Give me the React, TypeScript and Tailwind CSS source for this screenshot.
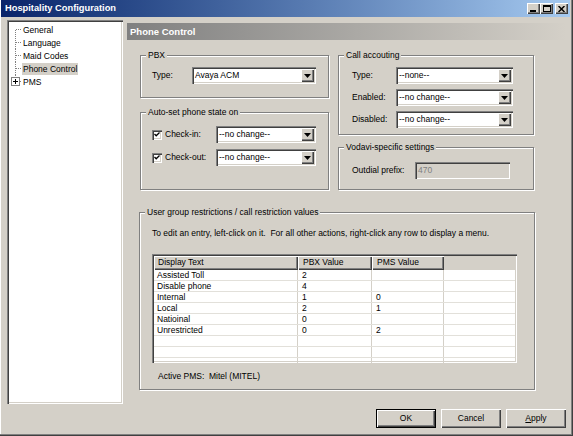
import React from 'react';

const rows: [string, string, string][] = [
  ['Assisted Toll', '2', ''],
  ['Disable phone', '4', ''],
  ['Internal', '1', '0'],
  ['Local', '2', '1'],
  ['Natioinal', '0', ''],
  ['Unrestricted', '0', '2'],
  ['', '', ''],
  ['', '', ''],
  ['', '', ''],
];

const treeItems = ['General', 'Language', 'Maid Codes', 'Phone Control', 'PMS'];

// Classic 3D edges
const sunken =
  'shadow-[inset_1px_1px_0_#808080,inset_2px_2px_0_#404040,inset_-1px_-1px_0_#ffffff,inset_-2px_-2px_0_#d4d0c8]';
const raised = 'shadow-[inset_1px_1px_0_#ffffff,inset_-1px_-1px_0_#404040,inset_-2px_-2px_0_#808080]';

function Combo({ value, w }: { value: string; w: string }) {
  return (
    <div className={`flex h-[17px] ${w} bg-white p-[2px] ${sunken}`}>
      <span className="flex-1 truncate pl-[1px] leading-[13px]">{value}</span>
      <span className={`flex w-[13px] items-center justify-center bg-[#d4d0c8] ${raised}`}>
        <svg width="7" height="4" viewBox="0 0 7 4">
          <path d="M0 0h7L3.5 4z" fill="#000" />
        </svg>
      </span>
    </div>
  );
}

function Check() {
  return (
    <span className={`flex h-[10px] w-[10px] items-center justify-center bg-white ${sunken}`}>
      <svg width="6" height="5" viewBox="0 0 6 5">
        <path d="M0.5 2L2.2 3.8L5.5 0.5" stroke="#000" strokeWidth="1.3" fill="none" />
      </svg>
    </span>
  );
}

function Group({ label, className, children }: { label: string; className: string; children?: React.ReactNode }) {
  return (
    <div className={`relative border border-[#808080] shadow-[inset_1px_1px_0_#ffffff,1px_1px_0_#ffffff] ${className}`}>
      <span className="absolute -top-[7px] left-[5px] bg-[#d4d0c8] px-[2px] leading-[12px]">{label}</span>
      {children}
    </div>
  );
}

function TreeLine({ idx, last }: { idx: number; last: boolean }) {
  const top = idx === 0 ? 6.5 : 0;
  return (
    <svg width="13" height="13" viewBox="0 0 13 13" shapeRendering="crispEdges">
      {last ? (
        <>
          <line x1="6.5" y1="0" x2="6.5" y2="2" stroke="#808080" strokeDasharray="1 1" />
          <rect x="2.5" y="2.5" width="8" height="8" fill="#fff" stroke="#808080" />
          <line x1="4" y1="6.5" x2="9" y2="6.5" stroke="#000" />
          <line x1="6.5" y1="4" x2="6.5" y2="9" stroke="#000" />
          <line x1="11" y1="6.5" x2="13" y2="6.5" stroke="#808080" strokeDasharray="1 1" />
        </>
      ) : (
        <>
          <line x1="6.5" y1={top} x2="6.5" y2="13" stroke="#808080" strokeDasharray="1 1" />
          <line x1="7" y1="6.5" x2="13" y2="6.5" stroke="#808080" strokeDasharray="1 1" />
        </>
      )}
    </svg>
  );
}

export default function App() {
  return (
    <div
      className={`flex h-[436px] w-[573px] flex-col overflow-hidden bg-[#d4d0c8] font-['Liberation_Sans',Arial,sans-serif] text-[8.5px] text-black shadow-[inset_-1px_-1px_0_#404040,inset_-2px_-2px_0_#808080,inset_1px_0_0_#ffffff]`}
    >
      {/* Title bar */}
      <div className="ml-[1px] mr-[3px] flex h-[17px] items-center bg-linear-to-r from-[#0a246a] to-[#a6caf0] pl-[4px] pr-[2px]">
        <span className="flex-1 text-[9.3px] font-bold text-white">Hospitality Configuration</span>
        <span className={`flex h-[11px] w-[13px] items-end bg-[#d4d0c8] pb-[2px] pl-[3px] ${raised}`}>
          <span className="h-[2px] w-[6px] bg-black" />
        </span>
        <span className={`flex h-[11px] w-[13px] items-center justify-center bg-[#d4d0c8] ${raised}`}>
          <span className="h-[7px] w-[8px] border border-t-2 border-black" />
        </span>
        <span className={`ml-[2px] flex h-[11px] w-[13px] items-center justify-center bg-[#d4d0c8] ${raised}`}>
          <svg width="7" height="6" viewBox="0 0 7 6">
            <path d="M0.5 0L6.5 6M6.5 0L0.5 6" stroke="#000" strokeWidth="1.5" />
          </svg>
        </span>
      </div>

      <div className="flex h-[387px]">
        {/* Tree */}
        <div className={`ml-[7px] mt-[3px] h-[384px] w-[116px] bg-white p-[2px] pt-[3px] ${sunken}`}>
          {treeItems.map((t, i) => (
            <div key={t} className="flex h-[13px] items-center">
              <TreeLine idx={i} last={i === treeItems.length - 1} />
              <span className={`px-[1px] leading-[12px] ${t === 'Phone Control' ? 'bg-[#d4d0c8]' : ''}`}>{t}</span>
            </div>
          ))}
        </div>

        {/* Right side */}
        <div className="ml-[4px] mt-[6px] w-[439px]">
          <div className="h-[17px] bg-linear-to-r from-[#808080] to-[#d4d0c8] pl-[3px] text-[9.5px] font-bold leading-[17px] text-white">
            Phone Control
          </div>

          <div className="mt-[15px] flex pl-[13px]">
            <div className="w-[189px]">
              <Group label="PBX" className="h-[43px] pl-[11px] pt-[11px]">
                <div className="flex items-center">
                  <span className="w-[40px]">Type:</span>
                  <Combo value="Avaya ACM" w="w-[124px]" />
                </div>
              </Group>
              <Group label="Auto-set phone state on" className="mt-[14px] h-[78px] pl-[11px] pt-[13px]">
                <div className="flex flex-col gap-[6px]">
                  <div className="flex items-center">
                    <Check />
                    <span className="ml-[3px] w-[51px]">Check-in:</span>
                    <Combo value="--no change--" w="w-[100px]" />
                  </div>
                  <div className="flex items-center">
                    <Check />
                    <span className="ml-[3px] w-[51px]">Check-out:</span>
                    <Combo value="--no change--" w="w-[100px]" />
                  </div>
                </div>
              </Group>
            </div>

            <div className="ml-[9px] w-[196px]">
              <Group label="Call accouting" className="h-[80px] pl-[13px] pt-[11px]">
                <div className="flex flex-col gap-[5px]">
                  {[
                    ['Type:', '--none--'],
                    ['Enabled:', '--no change--'],
                    ['Disabled:', '--no change--'],
                  ].map(([l, v]) => (
                    <div key={l} className="flex items-center">
                      <span className="w-[44px]">{l}</span>
                      <Combo value={v} w="w-[117px]" />
                    </div>
                  ))}
                </div>
              </Group>
              <Group label="Vodavi-specific settings" className="mt-[12px] h-[43px] pl-[13px] pt-[14px]">
                <div className="flex items-center">
                  <span className="w-[63px]">Outdial prefix:</span>
                  <div className={`h-[17px] w-[95px] bg-[#d4d0c8] p-[2px] pl-[3px] leading-[13px] text-[#808080] ${sunken}`}>
                    470
                  </div>
                </div>
              </Group>
            </div>
          </div>

          <Group label="User group restrictions / call restriction values" className="ml-[12px] mt-[22px] h-[178px] w-[396px] pl-[12px] pt-[15px]">
            <div className="leading-[11px]">
              To edit an entry, left-click on it.&nbsp; For all other actions, right-click any row to display a menu.
            </div>
            <div className={`mt-[15px] h-[109px] w-[365px] overflow-hidden bg-white p-[2px] ${sunken}`}>
              <div className="flex h-[14px] bg-[#d4d0c8] leading-[12px]">
                <span className={`w-[144px] pl-[4px] ${raised}`}>Display Text</span>
                <span className={`w-[74px] pl-[5px] ${raised}`}>PBX Value</span>
                <span className={`w-[72px] pl-[5px] ${raised}`}>PMS Value</span>
                <span className="flex-1" />
              </div>
              {rows.map((r, i) => (
                <div key={i} className="flex h-[11px] border-b border-[#e2e0da] leading-[10px]">
                  <span className="w-[144px] border-r border-[#d4d0c8] pl-[3px]">{r[0]}</span>
                  <span className="w-[74px] border-r border-[#d4d0c8] pl-[4px]">{r[1]}</span>
                  <span className="w-[72px] border-r border-[#d4d0c8] pl-[4px]">{r[2]}</span>
                  <span className="flex-1" />
                </div>
              ))}
            </div>
            <div className="ml-[6px] mt-[8px] whitespace-pre leading-[11px]">Active PMS:  Mitel (MITEL)</div>
          </Group>
        </div>
      </div>

      {/* Buttons */}
      <div className="mt-[5px] flex justify-end gap-[5px] pr-[7px]">
        <div className="h-[19px] w-[60px] border border-black">
          <div className={`flex h-full items-center justify-center bg-[#d4d0c8] ${raised}`}>OK</div>
        </div>
        <div className={`flex h-[19px] w-[60px] items-center justify-center bg-[#d4d0c8] ${raised}`}>Cancel</div>
        <div className={`flex h-[19px] w-[60px] items-center justify-center bg-[#d4d0c8] ${raised}`}>
          <span>
            <span className="underline">A</span>pply
          </span>
        </div>
      </div>
    </div>
  );
}
